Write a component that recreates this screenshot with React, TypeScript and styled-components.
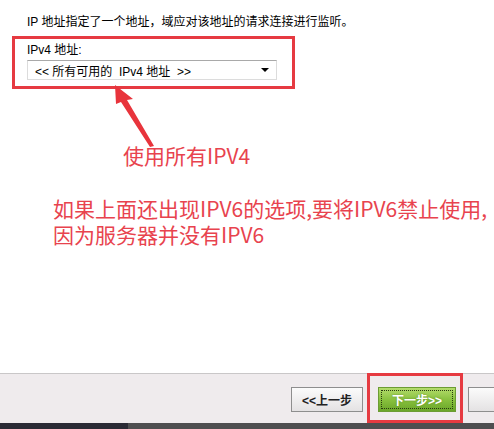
import React from 'react';
import styled, { createGlobalStyle } from 'styled-components';

const GlobalStyle = createGlobalStyle`
  html, body {
    margin: 0;
    padding: 0;
    background: #ffffff;
  }
`;

const Page = styled.div`
  width: 494px;
  height: 429px;
  display: flex;
  flex-direction: column;
  overflow: hidden;
  font-family: "Liberation Sans", "Noto Sans CJK SC", sans-serif;
  color: #000;
`;

const Main = styled.div`
  position: relative;
  flex: 1;
  display: flex;
  flex-direction: column;
`;

const Intro = styled.div`
  padding: 15px 0 0 27px;
  font-size: 12px;
  line-height: 14px;
`;

const Highlight = styled.div`
  box-sizing: border-box;
  margin: 7px 0 0 12px;
  width: 283px;
  height: 53px;
  border: 3px solid #e63a41;
  padding: 4px 0 0 12px;
`;

const FieldLabel = styled.div`
  font-size: 12px;
  line-height: 14px;
`;

const Select = styled.div`
  box-sizing: border-box;
  margin-top: 3px;
  width: 250px;
  height: 20px;
  display: flex;
  align-items: center;
  justify-content: space-between;
  padding: 0 7px 0 7px;
  background: #fff;
  border: 1px solid #dcdcdc;
  border-top-color: #a9a9a9;
  font-size: 12px;
  white-space: pre;
`;

const Caret = styled.span`
  width: 0;
  height: 0;
  border-left: 4px solid transparent;
  border-right: 4px solid transparent;
  border-top: 4px solid #000;
`;

const Note = styled.div<{ $top: number; $left: number }>`
  margin: ${({ $top }) => $top}px 0 0 ${({ $left }) => $left}px;
  font-family: "Noto Sans CJK SC", "Liberation Sans", sans-serif;
  font-size: 21px;
  line-height: 26px;
  color: #e8434e;
  white-space: nowrap;
`;

const ArrowLayer = styled.svg`
  position: absolute;
  left: 0;
  top: 0;
  pointer-events: none;
`;

const Footer = styled.div`
  box-sizing: border-box;
  height: 50px;
  border-top: 1px solid #c9c7c8;
  background: #efebed;
  display: flex;
  align-items: stretch;
  padding-left: 291px;
`;

const Button = styled.div`
  box-sizing: border-box;
  flex-shrink: 0;
  align-self: center;
  margin-top: 1px;
  width: 72px;
  height: 25px;
  display: flex;
  align-items: center;
  justify-content: center;
  border: 1px solid #8e8e8e;
  background: linear-gradient(#fbfbfb, #e4e2e3);
  font-size: 12px;
  font-weight: bold;
  color: #222;
`;

const FocusBox = styled.div`
  box-sizing: border-box;
  flex-shrink: 0;
  margin: -1px 5px 0 4px;
  width: 96px;
  border: 3px solid #e63a41;
  display: flex;
  align-items: center;
  padding: 0 0 0 8px;
`;

const PrimaryButton = styled.div`
  box-sizing: border-box;
  position: relative;
  margin-top: 2px;
  width: 78px;
  height: 25px;
  display: flex;
  align-items: center;
  justify-content: center;
  border: 1px solid #6c9c33;
  background: linear-gradient(#b4dc6c, #86bf3c 55%, #6aa529);
  font-size: 12px;
  font-weight: bold;
  color: #fff;
  text-shadow: 0 0 2px rgba(60, 100, 20, 0.6);

  &::after {
    content: '';
    position: absolute;
    inset: 2px;
    border: 1px dotted #2a3a10;
  }
`;

const StatusBar = styled.div`
  height: 6px;
  display: flex;
  background: #4e4e50;
`;

const StatusDark = styled.div`
  width: 128px;
  background: #2a2a35;
`;

export default function App() {
  return (
    <Page>
      <GlobalStyle />
      <Main>
        <Intro>IP 地址指定了一个地址，域应对该地址的请求连接进行监听。</Intro>
        <Highlight>
          <FieldLabel>IPv4 地址:</FieldLabel>
          <Select>
            <span>{'<< 所有可用的  IPv4 地址  >>'}</span>
            <Caret />
          </Select>
        </Highlight>
        <Note $top={53} $left={123}>使用所有IPV4</Note>
        <Note $top={27} $left={53}>
          如果上面还出现IPV6的选项,要将IPV6禁止使用,
          <br />
          因为服务器并没有IPV6
        </Note>
        <ArrowLayer width="494" height="373" viewBox="0 0 494 373">
          <path d="M115 85 L133 99 L127 100 L154 146 L150 147 L121 102 L116 104 Z" fill="#e8343c" />
        </ArrowLayer>
      </Main>
      <Footer>
        <Button>&lt;&lt;上一步</Button>
        <FocusBox>
          <PrimaryButton>下一步&gt;&gt;</PrimaryButton>
        </FocusBox>
        <Button />
      </Footer>
      <StatusBar>
        <StatusDark />
      </StatusBar>
    </Page>
  );
}
